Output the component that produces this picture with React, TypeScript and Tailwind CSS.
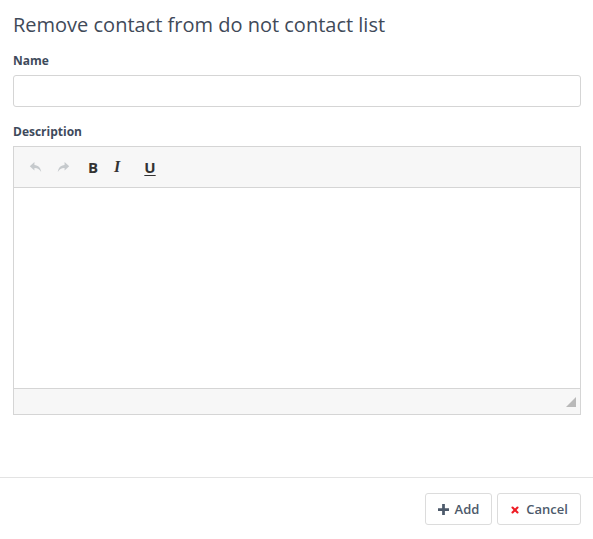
import { X } from "lucide-react";

function ReplyIcon({ flip }: { flip?: boolean }) {
  return (
    <svg
      viewBox="0 0 16 14"
      className={flip ? "h-[10px] w-[13px] -scale-x-100" : "h-[10px] w-[13px]"}
      fill="#c6cacd"
    >
      <path d="M6.5 0 L0 6 L6.5 12 V8.4 C10.5 8.2 13.5 9.6 16 14 C15.3 8.2 12 4.6 6.5 4.2 Z" />
    </svg>
  );
}

export default function App() {
  return (
    <div
      className="w-[593px] h-[539px] bg-white flex flex-col text-[#3e4a5b]"
      style={{ fontFamily: '"Open Sans", "Noto Sans", sans-serif' }}
    >
      <div className="flex-1 pl-[13px] pr-[12px] pt-[11px]">
        <h1 className="text-[20px] leading-[28px] text-[#3f4a59]">
          Remove contact from do not contact list
        </h1>

        <label className="block mt-[14px] text-[12px] font-bold leading-[16px]">
          Name
        </label>
        <input
          type="text"
          className="mt-[6px] block w-full h-[32px] rounded-[3px] border border-[#d5d5d5] bg-white px-2 outline-none"
        />

        <label className="block mt-[17px] text-[12px] font-bold leading-[16px]">
          Description
        </label>
        <div className="mt-[6px] border border-[#d5d5d5]">
          <div className="h-[41px] bg-[#f7f7f7] border-b border-[#d5d5d5] flex items-center pl-[15px] pb-[1px]">
            <ReplyIcon />
            <span className="ml-[15px]">
              <ReplyIcon flip />
            </span>
            <span className="ml-[16px] w-[14px] text-center text-[15px] leading-[20px] font-bold text-[#333]">
              B
            </span>
            <span
              className="ml-[10px] w-[14px] text-center text-[16px] leading-[20px] font-bold italic text-[#333]"
              style={{ fontFamily: '"Liberation Serif", serif' }}
            >
              I
            </span>
            <span className="ml-[19px] w-[14px] text-center text-[15px] leading-[20px] font-bold underline underline-offset-2 text-[#333]">
              U
            </span>
          </div>
          <div className="h-[200px] bg-white" />
          <div className="h-[26px] bg-[#f7f7f7] border-t border-[#d5d5d5] flex justify-end items-end pr-[4px] pb-[7px]">
            <svg viewBox="0 0 10 10" className="w-[10px] h-[10px]">
              <polygon points="10,0 10,10 0,10" fill="#b9b9b9" />
            </svg>
          </div>
        </div>
      </div>

      <div className="border-t border-[#e3e3e3] h-[62px] flex items-start justify-end gap-[5px] pt-[15px] pr-[12px]">
        <button className="h-[32px] w-[67px] rounded-[3px] border border-[#dcdcdc] bg-white flex items-center justify-center gap-[6px] pt-[1px] text-[13px] font-semibold text-[#4d5a6b]">
          <svg viewBox="0 0 12 12" className="w-[11px] h-[11px]" fill="#4d5a6b">
            <path d="M4.5 0 H7.5 V4.5 H12 V7.5 H7.5 V12 H4.5 V7.5 H0 V4.5 H4.5 Z" />
          </svg>
          Add
        </button>
        <button className="h-[32px] w-[84px] rounded-[3px] border border-[#dcdcdc] bg-white flex items-center justify-center gap-[6px] pt-[1px] text-[13px] font-semibold text-[#4d5a6b]">
          <X className="w-[10px] h-[10px]" strokeWidth={5} color="#ee1c24" />
          Cancel
        </button>
      </div>
    </div>
  );
}
